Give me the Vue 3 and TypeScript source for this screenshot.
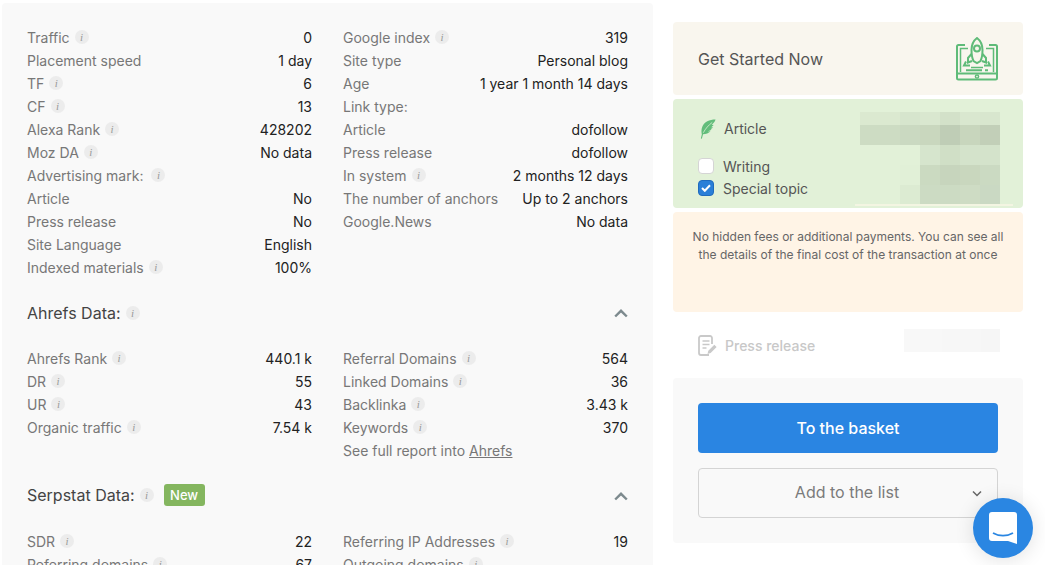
<script setup lang="ts">
interface Row { label: string; value?: string; info?: boolean; gap?: boolean }

const mainLeft: Row[] = [
  { label: 'Traffic', value: '0', info: true },
  { label: 'Placement speed', value: '1 day' },
  { label: 'TF', value: '6', info: true },
  { label: 'CF', value: '13', info: true },
  { label: 'Alexa Rank', value: '428202', info: true },
  { label: 'Moz DA', value: 'No data', info: true },
  { label: 'Advertising mark:', info: true, gap: true },
  { label: 'Article', value: 'No' },
  { label: 'Press release', value: 'No' },
  { label: 'Site Language', value: 'English' },
  { label: 'Indexed materials', value: '100%', info: true },
]
const mainRight: Row[] = [
  { label: 'Google index', value: '319', info: true },
  { label: 'Site type', value: 'Personal blog' },
  { label: 'Age', value: '1 year 1 month 14 days' },
  { label: 'Link type:' },
  { label: 'Article', value: 'dofollow' },
  { label: 'Press release', value: 'dofollow' },
  { label: 'In system', value: '2 months 12 days', info: true },
  { label: 'The number of anchors', value: 'Up to 2 anchors' },
  { label: 'Google.News', value: 'No data' },
]
const ahrefsLeft: Row[] = [
  { label: 'Ahrefs Rank', value: '440.1 k', info: true },
  { label: 'DR', value: '55', info: true },
  { label: 'UR', value: '43', info: true },
  { label: 'Organic traffic', value: '7.54 k', info: true },
]
const ahrefsRight: Row[] = [
  { label: 'Referral Domains', value: '564', info: true },
  { label: 'Linked Domains', value: '36', info: true },
  { label: 'Backlinka', value: '3.43 k', info: true },
  { label: 'Keywords', value: '370', info: true },
]
const serpLeft: Row[] = [
  { label: 'SDR', value: '22', info: true },
  { label: 'Referring domains', value: '67', info: true },
]
const serpRight: Row[] = [
  { label: 'Referring IP Addresses', value: '19', info: true },
  { label: 'Outgoing domains', info: true },
]

const mosaicColumns = [860, 880, 900, 920, 940, 960, 980]
const mosaicRows: { h: number; cells: string[] }[] = [
  { h: 13, cells: ['#dbe9d0', '#dbe9d0', '#d6e5cd', '#d9e7cf', '#d3e1c9', '#d9e7cf', '#d8e6ce'] },
  { h: 20, cells: ['#cddcc3', '#cddcc3', '#cad9c1', '#c9d7be', '#bfcdb6', '#c8d6bd', '#c2cfb8'] },
  { h: 20, cells: ['transparent', 'transparent', 'transparent', '#d6e5cd', '#d0dfc6', '#d4e3cb', '#d4e3cb'] },
  { h: 20, cells: ['transparent', 'transparent', '#e1f0d7', '#cbdac1', '#c7d5bd', '#c9d7be', '#cbdac2'] },
  { h: 20, cells: ['transparent', 'transparent', '#dcebd2', '#ccdbc3', '#ccdbc3', '#cedcc4', '#cad9c3'] },
]
const pressColumns = ['#f8f8f8', '#f8f8f8', '#f7f7f7', '#f7f7f7', '#f6f6f6']
</script>

<template>
  <div class="page">
    <section class="stats">
      <div class="cols">
        <div class="col">
          <div v-for="r in mainLeft" :key="r.label" class="row">
            <span class="label">{{ r.label }}<i v-if="r.info" class="info" :class="{ wide: r.gap }">i</i></span>
            <span class="value">{{ r.value }}</span>
          </div>
        </div>
        <div class="col">
          <div v-for="r in mainRight" :key="r.label + r.value" class="row">
            <span class="label">{{ r.label }}<i v-if="r.info" class="info">i</i></span>
            <span class="value">{{ r.value }}</span>
          </div>
        </div>
      </div>

      <div class="head head-ahrefs">
        <h3>Ahrefs Data:<i class="info">i</i></h3>
        <svg class="chev" width="14" height="9" viewBox="0 0 14 9"><path d="M1.200 7.500 7 1.800l5.800 5.700" fill="none" stroke="#7d8a8e" stroke-width="2.400" /></svg>
      </div>
      <div class="cols">
        <div class="col">
          <div v-for="r in ahrefsLeft" :key="r.label" class="row">
            <span class="label">{{ r.label }}<i class="info">i</i></span>
            <span class="value">{{ r.value }}</span>
          </div>
        </div>
        <div class="col">
          <div v-for="r in ahrefsRight" :key="r.label" class="row">
            <span class="label">{{ r.label }}<i class="info">i</i></span>
            <span class="value">{{ r.value }}</span>
          </div>
          <div class="row"><span class="label">See full report into <a class="link">Ahrefs</a></span></div>
        </div>
      </div>

      <div class="head head-serp">
        <h3>Serpstat Data:<i class="info">i</i><span class="badge">New</span></h3>
        <svg class="chev" width="14" height="9" viewBox="0 0 14 9"><path d="M1.200 7.500 7 1.800l5.800 5.700" fill="none" stroke="#7d8a8e" stroke-width="2.400" /></svg>
      </div>
      <div class="cols">
        <div class="col">
          <div v-for="r in serpLeft" :key="r.label" class="row">
            <span class="label">{{ r.label }}<i class="info">i</i></span>
            <span class="value">{{ r.value }}</span>
          </div>
        </div>
        <div class="col">
          <div v-for="r in serpRight" :key="r.label" class="row">
            <span class="label">{{ r.label }}<i class="info">i</i></span>
            <span class="value">{{ r.value }}</span>
          </div>
        </div>
      </div>
    </section>

    <aside class="side">
      <div class="card start">
        <span>Get Started Now</span>
        <svg width="42" height="44" viewBox="0 0 42 44" fill="none" stroke="#5fbb78" stroke-width="2">
          <path d="M9 8H2.500A1.500 1.500 0 0 0 1 9.500V41a1.500 1.500 0 0 0 1.500 1.500h37A1.500 1.500 0 0 0 41 41V9.500A1.500 1.500 0 0 0 39.500 8H33" />
          <path d="M4.500 35V11.500H12M37.500 35V11.500H30" stroke-width="1.500" />
          <path d="M1 36.500h40" />
          <circle cx="21" cy="39.500" r="1.600" stroke-width="1.500" />
          <path d="M21 1c-4 3-5.500 8-5.500 12 0 5 1 9 2 11l3.500 2 3.500-2c1-2 2-6 2-11 0-4-1.500-9-5.500-12Z" />
          <circle cx="21" cy="11.500" r="3" />
          <path d="M15.500 17 12 21v4.500l4-1.500M26.500 17l3.500 4v4.500l-4-1.500" />
          <path d="M10 24.500 8 28.500h6M32 24.500l2 4h-6" />
          <path d="M10 33.200h16M29 33.200h3" />
          <path d="M15 30.500h12" stroke-width="1.500" />
        </svg>
      </div>

      <div class="card article">
        <div class="article-title">
          <svg width="17" height="20" viewBox="0 0 18 21">
            <path fill="#62bd7b" d="M17.500.5C11 .5 5.500 3 3.500 8c-1.200 3-1 6-.5 8L2 20.500l1 .3L4.300 16c3 0 6-1 7.800-3l-3 .2 4.200-2-1-.5 2.700-1.700-2-.3 2.500-2.500-2-.2C15.500 4.500 17 2.500 17.500.5Z" />
            <path d="M4.500 14.500C7 10 10 6.500 14 3.500" fill="none" stroke="#e2f1d8" stroke-width=".8" />
          </svg>
          <span>Article</span>
        </div>
        <label class="check">
          <span class="box" />Writing
        </label>
        <label class="check">
          <span class="box on">
            <svg width="10" height="8" viewBox="0 0 10 8"><path d="M1 4l2.800 2.800L9 1.200" fill="none" stroke="#fff" stroke-width="2" /></svg>
          </span>Special topic
        </label>
        <div class="mosaic">
          <div v-for="(row, i) in mosaicRows" :key="i" class="mosaic-row" :style="{ height: row.h + 'px' }">
            <span v-for="(c, j) in row.cells" :key="mosaicColumns[j]" :style="{ background: c }" />
          </div>
        </div>
        <div class="sliver" />
      </div>

      <div class="card note">
        No hidden fees or additional payments. You can see all the details of the final cost of the transaction at once
      </div>

      <div class="press">
        <svg width="19" height="21" viewBox="0 0 19 21" fill="none" stroke="#c9c9c9" stroke-width="1.800">
          <path d="M14 9V3a2 2 0 0 0-2-2H3a2 2 0 0 0-2 2v15a2 2 0 0 0 2 2h8" />
          <path d="M4.500 6h7M4.500 9.500h7M4.500 13h4" stroke-width="1.500" />
          <path d="M9.500 19l.8-3.300 6-6 2.300 2.300-6 6Z" fill="#c9c9c9" stroke="none" />
        </svg>
        <span>Press release</span>
        <div class="press-blur">
          <span v-for="(c, i) in pressColumns" :key="i" :style="{ background: c }" />
        </div>
      </div>

      <div class="card actions">
        <button class="basket">To the basket</button>
        <button class="list">
          <span class="list-text">Add to the list</span>
          <svg class="list-chev" width="10" height="7" viewBox="0 0 10 7"><path d="M1 1.500l4 4 4-4" fill="none" stroke="#666" stroke-width="1.500" /></svg>
        </button>
      </div>
    </aside>

    <div class="chat">
      <svg width="28" height="32" viewBox="0 0 28 32">
        <path d="M3 0h22a3 3 0 0 1 3 3v29l-9-3H3a3 3 0 0 1-3-3V3a3 3 0 0 1 3-3Z" fill="#fff" />
        <path d="M4 21c6 3.500 14 3.500 20 0" fill="none" stroke="#2a86e2" stroke-width="1.800" />
      </svg>
    </div>
  </div>
</template>

<style>
html, body { margin: 0; background: #fff; overflow: hidden; }
</style>

<style scoped>
.page {
  position: relative;
  width: 1045px;
  height: 565px;
  overflow: hidden;
  display: flex;
  align-items: flex-start;
  font-family: Inter, "Liberation Sans", sans-serif;
  font-size: 14px;
  color: #222;
}
.stats {
  box-sizing: border-box;
  width: 651px;
  height: 562px;
  margin: 3px 0 0 2px;
  padding: 23px 25px 0;
  background: #f9f9f9;
  border-radius: 4px 4px 0 0;
  overflow: hidden;
  flex: none;
}
.cols { display: flex; gap: 31px; }
.col { width: 285px; flex: none; }
.row {
  display: flex;
  justify-content: space-between;
  height: 23px;
  line-height: 23px;
  white-space: nowrap;
}
.label { color: #777; }
.value { color: #222; }
.link { color: #777; text-decoration: underline; }
.info {
  display: inline-block;
  width: 14px;
  height: 14px;
  margin-left: 5px;
  border-radius: 50%;
  background: #ececec;
  color: #999;
  font: italic 11px/14px "Liberation Serif", serif;
  text-align: center;
  vertical-align: 2px;
}
.info.wide { margin-left: 8px; }
.head {
  display: flex;
  align-items: center;
  justify-content: space-between;
  height: 24px;
  margin: 22px 0;
}
.head h3 {
  margin: 0;
  font-size: 16px;
  font-weight: 400;
  color: #444;
  display: flex;
  align-items: center;
}
.head-serp h3 { margin-top: -2px; }
.badge {
  margin-left: 10px;
  width: 41px;
  height: 22px;
  line-height: 22px;
  text-align: center;
  border-radius: 3px;
  background: #84b65f;
  color: #fff;
  font-size: 13px;
  font-weight: 500;
}
.side {
  width: 350px;
  margin: 22px 0 0 20px;
  display: flex;
  flex-direction: column;
  flex: none;
}
.card { border-radius: 4px; box-sizing: border-box; }
.start {
  height: 73px;
  background: #f9f6ee;
  display: flex;
  align-items: center;
  justify-content: space-between;
  padding: 1px 25px 0;
  font-size: 16px;
  color: #555;
}
.start svg { margin-top: -1px; }
.article {
  position: relative;
  height: 109px;
  margin-top: 4px;
  background: #e2f1d8;
  padding: 17px 25px 0;
  color: #555;
}
.article-title {
  display: flex;
  align-items: center;
  gap: 8px;
  height: 24px;
  margin-bottom: 15px;
  padding-left: 1px;
}
.article-title svg { margin-top: 2px; }
.check {
  display: flex;
  align-items: center;
  gap: 9px;
  height: 22px;
}
.box {
  box-sizing: border-box;
  width: 16px;
  height: 16px;
  border-radius: 4px;
  background: #fff;
  border: 1px solid #d5d5d5;
  display: flex;
  align-items: center;
  justify-content: center;
}
.box.on { background: #2a7fd8; border-color: #1f6bbd; }
.mosaic {
  position: absolute;
  left: 187px;
  top: 13px;
  width: 140px;
}
.mosaic-row { display: grid; grid-template-columns: repeat(7, 20px); }
.sliver {
  position: absolute;
  left: 182px;
  right: 10px;
  bottom: 2px;
  height: 2px;
  background: #f3f5e2;
}
.note {
  height: 100px;
  margin-top: 4px;
  background: #fff4e6;
  padding: 16px 19px 0;
  font-size: 12px;
  line-height: 18px;
  text-align: center;
  color: #666;
}
.press {
  position: relative;
  height: 66px;
  display: flex;
  align-items: center;
  gap: 8px;
  padding: 0 0 0 25px;
  color: #c8c8c8;
  font-weight: 500;
}
.press-blur {
  position: absolute;
  left: 231px;
  top: 17px;
  width: 96px;
  height: 23px;
  display: grid;
  grid-template-columns: repeat(5, 1fr);
}
.actions {
  height: 165px;
  background: #f9f9f9;
  padding: 25px 25px 0;
}
.actions button {
  display: block;
  width: 300px;
  height: 50px;
  padding: 0;
  font-family: inherit;
  font-size: 16px;
  border-radius: 4px;
  position: relative;
}
.basket {
  background: #2a85e2;
  color: #fff;
  border: 0;
  font-weight: 500;
}
.list {
  margin-top: 15px;
  background: transparent;
  border: 1px solid #d4d4d4;
  color: #7b7b7b;
}
.list-text { position: relative; top: -1px; left: -1px; }
.list-chev { position: absolute; right: 15px; top: 21px; }
.chat {
  position: absolute;
  left: 973px;
  top: 498px;
  width: 60px;
  height: 60px;
  border-radius: 50%;
  background: #2a86e2;
  box-shadow: 0 2px 20px rgba(0, 0, 0, .12);
  display: flex;
  align-items: center;
  justify-content: center;
}
</style>
